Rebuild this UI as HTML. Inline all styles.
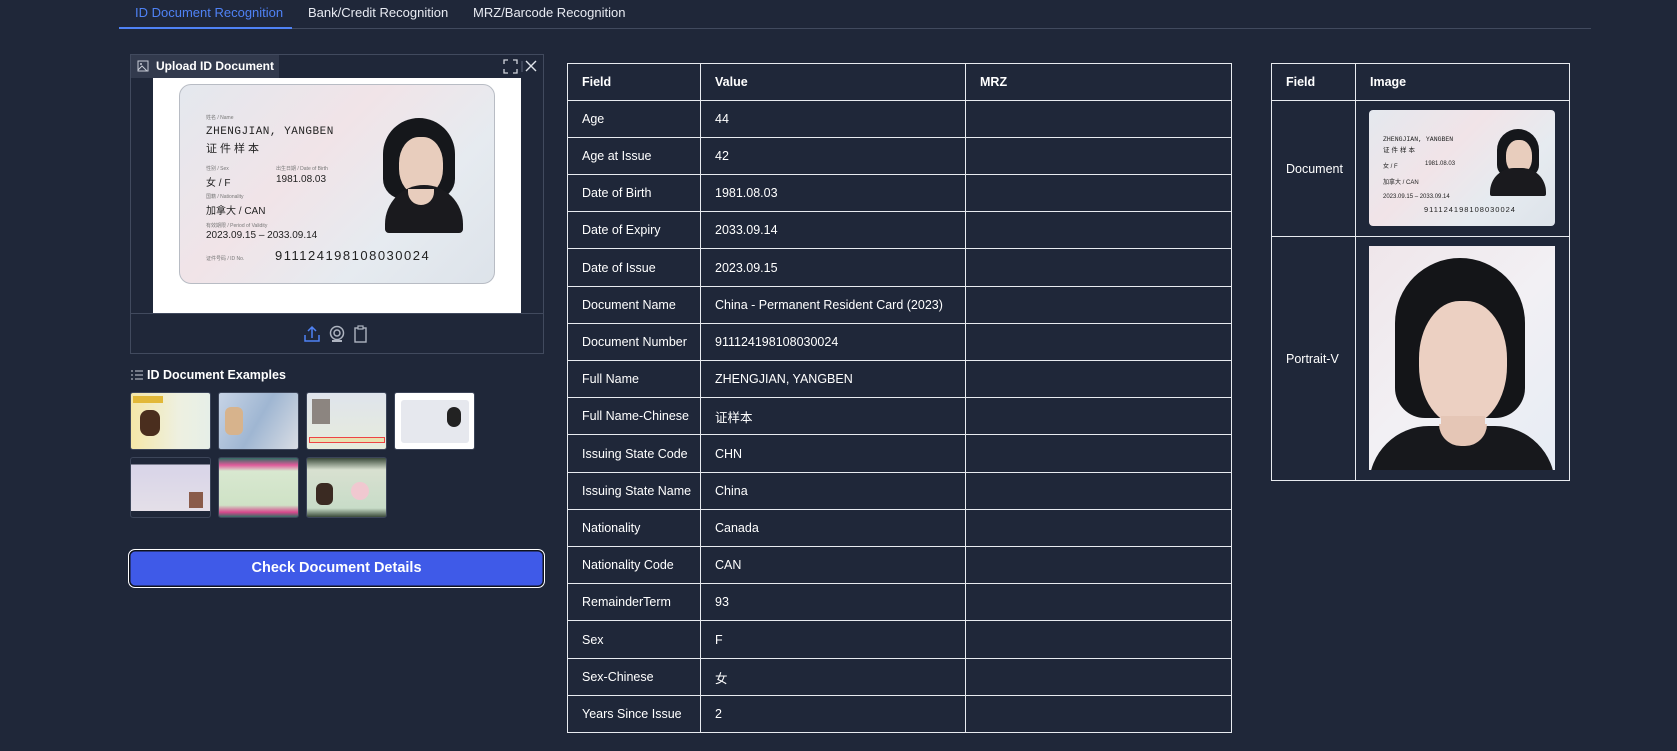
<!DOCTYPE html>
<html><head><meta charset="utf-8">
<style>
*{box-sizing:border-box;margin:0;padding:0}
body{width:1677px;height:751px;background:#1f2739;font-family:"Liberation Sans","Noto Sans CJK SC",sans-serif;color:#fff;position:relative;overflow:hidden}
.abs{position:absolute}
.tab{position:absolute;top:5px;font-size:13px;color:#e8ebf2}
table{border-collapse:collapse;position:absolute;table-layout:fixed}
td,th{border:1.5px solid #e8ebf0;font-size:12.5px;text-align:left;padding-left:14px;color:#fff;white-space:nowrap}
th{font-weight:bold}
.card{position:absolute;background:linear-gradient(135deg,#e4e8ee,#f1e4e8 40%,#e6ebf0 70%,#dde3ea);border:1px solid #b8bcc4;border-radius:12px;overflow:hidden;color:#222}
.thumb{position:absolute;width:81px;height:58px;border:1px solid #3c4559;border-radius:3px;overflow:hidden}
</style></head><body>
<div class="tab" style="left:135px;color:#4f82f5">ID Document Recognition</div>
<div class="tab" style="left:308px">Bank/Credit Recognition</div>
<div class="tab" style="left:473px">MRZ/Barcode Recognition</div>
<div class="abs" style="left:119px;top:28px;width:1472px;height:1px;background:#414a5e"></div>
<div class="abs" style="left:119px;top:27px;width:173px;height:2px;background:#4f82f5"></div>

<!-- upload panel -->
<div class="abs" style="left:130px;top:54px;width:414px;height:300px;border:1px solid #414a5e"></div>
<div class="abs" style="left:131px;top:55px;width:148px;height:23px;background:#323a4d;font-size:12px;font-weight:bold;line-height:23px;padding-left:25px;white-space:nowrap">Upload ID Document</div>
<svg class="abs" style="left:137px;top:60px" width="12" height="12" viewBox="0 0 12 12"><rect x="1" y="1" width="10" height="10" fill="none" stroke="#c8ccd6"/><circle cx="4" cy="4" r="1" fill="#c8ccd6"/><path d="M1 10l4-4 5 5" fill="none" stroke="#c8ccd6"/></svg>
<div class="abs" style="left:498px;top:55px;width:45px;height:23px;background:#1f2739"></div>
<svg class="abs" style="left:503px;top:59px" width="36" height="15" viewBox="0 0 36 15"><path d="M1 5V1h4M10 1h4v4M14 10v4h-4M5 14H1v-4" fill="none" stroke="#d0d4dc" stroke-width="1.3"/><path d="M19 2v11" stroke="#5a6275"/><path d="M23 2l10 10M33 2L23 12" stroke="#e0e4ea" stroke-width="1.4"/></svg>
<div class="abs" style="left:153px;top:78px;width:368px;height:235px;background:#fff"></div>
<div class="abs" style="left:130px;top:313px;width:414px;height:1px;background:#414a5e"></div>
<div class="card" style="left:179px;top:84px;width:316px;height:200px">
 <div class="abs" style="left:26px;top:29px;font-size:5px;color:#777">姓名 / Name</div>
 <div class="abs" style="left:26px;top:41px;font-family:'Liberation Mono',monospace;font-size:11px;letter-spacing:.5px">ZHENGJIAN, YANGBEN</div>
 <div class="abs" style="left:26px;top:55px;font-size:11px;letter-spacing:3px">证件样本</div>
 <div class="abs" style="left:26px;top:80px;font-size:5px;color:#777">性别 / Sex</div>
 <div class="abs" style="left:96px;top:80px;font-size:5px;color:#777">出生日期 / Date of Birth</div>
 <div class="abs" style="left:26px;top:89px;font-size:10px">女 / F</div>
 <div class="abs" style="left:96px;top:89px;font-size:10px">1981.08.03</div>
 <div class="abs" style="left:26px;top:108px;font-size:5px;color:#777">国籍 / Nationality</div>
 <div class="abs" style="left:26px;top:117px;font-size:10px">加拿大 / CAN</div>
 <div class="abs" style="left:26px;top:137px;font-size:5px;color:#777">有效期限 / Period of Validity</div>
 <div class="abs" style="left:26px;top:145px;font-size:10px">2023.09.15 – 2033.09.14</div>
 <div class="abs" style="left:26px;top:170px;font-size:5px;color:#777">证件号码 / ID No.</div>
 <div class="abs" style="left:95px;top:163px;font-size:13px;letter-spacing:1.5px">911124198108030024</div>
 <div class="abs" style="left:203px;top:33px;width:72px;height:81px;background:#15171b;border-radius:36px 36px 20px 20px"></div>
 <div class="abs" style="left:219px;top:52px;width:44px;height:58px;background:#e8cdbd;border-radius:45%"></div>
 <div class="abs" style="left:205px;top:100px;width:78px;height:48px;background:#1a1a1e;border-radius:40px 40px 4px 4px"></div>
 <div class="abs" style="left:228px;top:104px;width:26px;height:16px;background:#e8cdbd;border-radius:0 0 13px 13px"></div>
</div>
<svg class="abs" style="left:304px;top:325px" width="64" height="18" viewBox="0 0 64 18"><path d="M1 10v6h14v-6M8 13V2M4 6l4-4 4 4" fill="none" stroke="#4f82f5" stroke-width="1.5"/><circle cx="33" cy="8" r="6.5" fill="none" stroke="#aeb4c0" stroke-width="1.5"/><circle cx="33" cy="8" r="3" fill="none" stroke="#aeb4c0" stroke-width="1.5"/><path d="M28 16h10" stroke="#aeb4c0" stroke-width="2"/><rect x="51" y="3" width="11" height="14" fill="none" stroke="#aeb4c0" stroke-width="1.4"/><rect x="54" y="1" width="5" height="3" fill="#1f2739" stroke="#aeb4c0" stroke-width="1.2"/></svg>

<svg class="abs" style="left:131px;top:370px" width="12" height="10" viewBox="0 0 12 10"><path d="M0 1h2M0 5h2M0 9h2M4 1h8M4 5h8M4 9h8" stroke="#c8ccd6"/></svg>
<div class="abs" style="left:147px;top:368px;font-size:12.5px;font-weight:bold">ID Document Examples</div>
<div class="thumb" style="left:130px;top:392px;background:linear-gradient(90deg,#f5e7a8,#eef0e0 60%,#e6efe8)"><div class="abs" style="left:9px;top:17px;width:20px;height:26px;background:#4a2e1e;border-radius:8px"></div><div class="abs" style="left:2px;top:3px;width:30px;height:7px;background:#e2b838"></div></div>
<div class="thumb" style="left:218px;top:392px;background:linear-gradient(120deg,#c7d4e6,#9fb6d2 50%,#d9dde4)"><div class="abs" style="left:6px;top:14px;width:18px;height:28px;background:#d7b38c;border-radius:6px"></div></div>
<div class="thumb" style="left:306px;top:392px;background:linear-gradient(180deg,#dfe4ec,#e7ecdc)"><div class="abs" style="left:5px;top:6px;width:18px;height:25px;background:#8c8580"></div><div class="abs" style="left:2px;top:44px;width:76px;height:6px;border:1px solid #e44;background:#e8e2b0"></div></div>
<div class="thumb" style="left:394px;top:392px;background:#fff"><div class="abs" style="left:6px;top:7px;width:68px;height:43px;background:#e6e8ee;border-radius:3px"></div><div class="abs" style="left:52px;top:14px;width:14px;height:20px;background:#222;border-radius:7px"></div></div>
<div class="thumb" style="left:130px;top:457px;height:61px;background:linear-gradient(180deg,#1f2739 0 11%,#d8d4e8 11%,#e4dfe8 90%,#1f2739 90%)"><div class="abs" style="left:58px;top:34px;width:14px;height:16px;background:#8a5b4a"></div></div>
<div class="thumb" style="left:218px;top:457px;height:61px;background:linear-gradient(180deg,#2f6e63,#e05a9a 12%,#d8e8d0 22%,#cfe2c6 80%,#d6488c 92%,#2f6e63)"></div>
<div class="thumb" style="left:306px;top:457px;height:61px;background:linear-gradient(180deg,#3a4a3a,#d8e0d0 20%,#c8dcc8 85%,#3a4a3a)"><div class="abs" style="left:9px;top:25px;width:17px;height:22px;background:#3a2a22;border-radius:6px"></div><div class="abs" style="left:44px;top:24px;width:18px;height:18px;background:#f0c8d0;border-radius:9px"></div></div>

<div class="abs" style="left:128px;top:549px;width:417px;height:39px;border:1.5px solid #fff;border-radius:7px;background:#3f5ae8;box-shadow:inset 0 0 0 1.5px #10131c;font-size:14.5px;font-weight:bold;text-align:center;line-height:36px">Check Document Details</div>

<table style="left:567px;top:63px;width:664px">
<colgroup><col style="width:133px"><col style="width:265px"><col style="width:266px"></colgroup>
<tr style="height:37px"><th>Field</th><th>Value</th><th>MRZ</th></tr>
<tr style="height:37px"><td>Age</td><td>44</td><td></td></tr>
<tr style="height:37px"><td>Age at Issue</td><td>42</td><td></td></tr>
<tr style="height:37px"><td>Date of Birth</td><td>1981.08.03</td><td></td></tr>
<tr style="height:37px"><td>Date of Expiry</td><td>2033.09.14</td><td></td></tr>
<tr style="height:38px"><td>Date of Issue</td><td>2023.09.15</td><td></td></tr>
<tr style="height:37px"><td>Document Name</td><td>China - Permanent Resident Card (2023)</td><td></td></tr>
<tr style="height:37px"><td>Document Number</td><td>911124198108030024</td><td></td></tr>
<tr style="height:37px"><td>Full Name</td><td>ZHENGJIAN, YANGBEN</td><td></td></tr>
<tr style="height:37px"><td>Full Name-Chinese</td><td>证样本</td><td></td></tr>
<tr style="height:38px"><td>Issuing State Code</td><td>CHN</td><td></td></tr>
<tr style="height:37px"><td>Issuing State Name</td><td>China</td><td></td></tr>
<tr style="height:37px"><td>Nationality</td><td>Canada</td><td></td></tr>
<tr style="height:37px"><td>Nationality Code</td><td>CAN</td><td></td></tr>
<tr style="height:37px"><td>RemainderTerm</td><td>93</td><td></td></tr>
<tr style="height:38px"><td>Sex</td><td>F</td><td></td></tr>
<tr style="height:37px"><td>Sex-Chinese</td><td>女</td><td></td></tr>
<tr style="height:37px"><td>Years Since Issue</td><td>2</td><td></td></tr>
</table>

<table style="left:1271px;top:63px;width:298px">
<colgroup><col style="width:84px"><col style="width:214px"></colgroup>
<tr style="height:37px"><th>Field</th><th>Image</th></tr>
<tr style="height:136px"><td>Document</td><td></td></tr>
<tr style="height:244px"><td>Portrait-V</td><td></td></tr>
</table>
<div class="card" style="left:1369px;top:110px;width:186px;height:116px;border-radius:4px;border:none">
 <div class="abs" style="left:14px;top:26px;font-family:'Liberation Mono',monospace;font-size:6.5px">ZHENGJIAN, YANGBEN</div>
 <div class="abs" style="left:14px;top:34px;font-size:6.5px;letter-spacing:2px">证件样本</div>
 <div class="abs" style="left:14px;top:51px;font-size:6px">女 / F</div>
 <div class="abs" style="left:56px;top:51px;font-size:6px">1981.08.03</div>
 <div class="abs" style="left:14px;top:67px;font-size:6px">加拿大 / CAN</div>
 <div class="abs" style="left:14px;top:84px;font-size:6px">2023.09.15 – 2033.09.14</div>
 <div class="abs" style="left:55px;top:95px;font-size:7.5px;letter-spacing:1px">911124198108030024</div>
 <div class="abs" style="left:128px;top:19px;width:42px;height:48px;background:#15171b;border-radius:21px 21px 12px 12px"></div>
 <div class="abs" style="left:137px;top:30px;width:26px;height:34px;background:#e8cdbd;border-radius:45%"></div>
 <div class="abs" style="left:121px;top:58px;width:56px;height:28px;background:#1a1a1e;border-radius:24px 24px 2px 2px"></div>
</div>
<div class="abs" style="left:1369px;top:246px;width:186px;height:224px;background:linear-gradient(135deg,#efe6ea,#f2f0f4 50%,#e6ecf4);overflow:hidden">
 <div class="abs" style="left:26px;top:12px;width:130px;height:160px;background:#141518;border-radius:65px 65px 30px 30px"></div>
 <div class="abs" style="left:50px;top:55px;width:88px;height:125px;background:#ecd0c2;border-radius:46% 46% 48% 48%"></div>
 <div class="abs" style="left:72px;top:170px;width:44px;height:30px;background:#e5c6b6"></div>
 <div class="abs" style="left:0;top:180px;width:186px;height:60px;background:#17181c;border-radius:90px 90px 0 0"></div>
 <div class="abs" style="left:70px;top:178px;width:48px;height:22px;background:#e5c6b6;border-radius:0 0 24px 24px"></div>
</div>
</body></html>
